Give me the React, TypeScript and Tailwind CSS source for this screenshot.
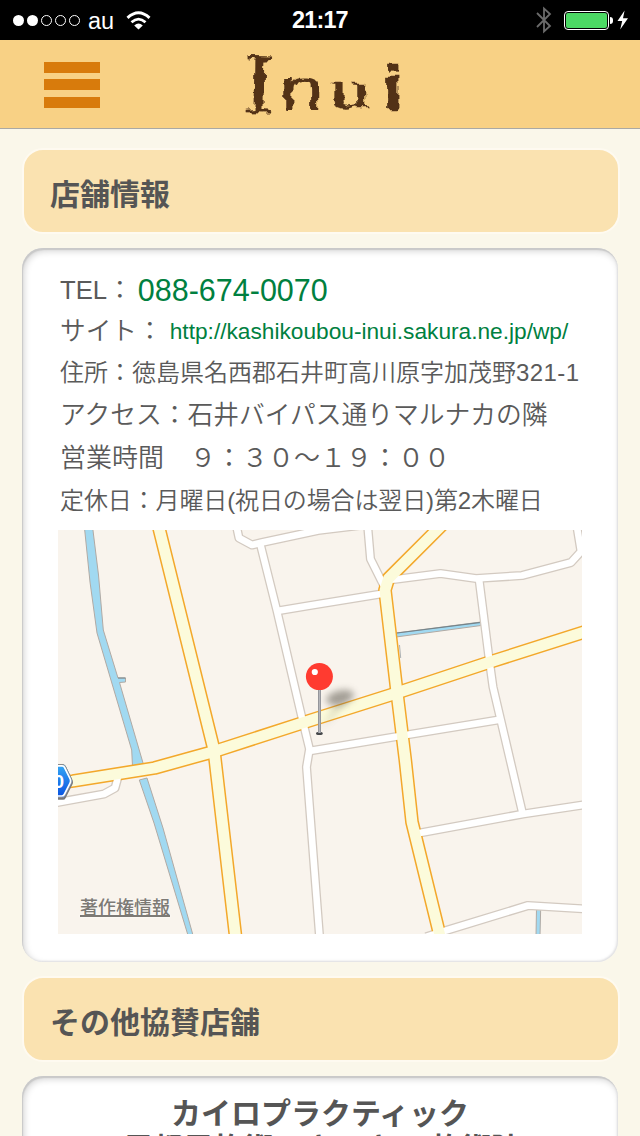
import type { ReactNode } from "react";

const minorRoads = [
  "M236 524 L239 538 L252 545 L262 542.5 L318 530.5 L363 525",
  "M260 543 L277 611 L302 718 L309.5 749 L306.5 767 L319.5 936",
  "M277 611 L310 605.5 L384 593.5",
  "M367.5 524 L370.5 559 L384 586",
  "M390 580 L440.5 573.5 L476 578.5 L522 575.5 L571 562.5 L581 551.5 L576.5 524",
  "M479 579 L489 658 L493 687 L500.5 719 L522.5 813",
  "M309.5 751 L397 736.5 L501 719.5",
  "M417 833.5 L523 814 L586 804.5",
  "M426 937 L443 931.5 L528 905.5 L586 909",
  "M54 803 L104 794 L115 788 L118 777",
];

const mainRoads = [
  "M158 524 L214 750 L236 940",
  "M54 783.5 L73 781 L154.5 768 L214 751.5 L310 720.5 L392 694.5 L490 662 L586 631.5",
  "M442 525 L388.5 578.5 L385 590 L396.7 690 L405.3 760 L412 822 L440 936",
];

function Roads({ paths, className, width }: { paths: string[]; className: string; width: number }) {
  return (
    <g className={className} strokeWidth={width} fill="none" strokeLinejoin="round">
      {paths.map((d) => (
        <path key={d} d={d} />
      ))}
    </g>
  );
}

function ShopMap() {
  return (
    <div className="relative h-[404px] w-[524px] overflow-hidden">
      <svg viewBox="58 530 524 404" className="block h-full w-full" role="img" aria-label="地図">
        <defs>
          <linearGradient id="shield" x1="0" y1="0" x2="0" y2="1">
            <stop offset="0" stopColor="#35a8f5" />
            <stop offset="1" stopColor="#0850e0" />
          </linearGradient>
          <linearGradient id="stick" x1="0" y1="0" x2="1" y2="0">
            <stop offset="0" stopColor="#85868b" />
            <stop offset=".5" stopColor="#b5b6bb" />
            <stop offset="1" stopColor="#85868b" />
          </linearGradient>
          <filter id="soft" x="-50%" y="-50%" width="200%" height="200%">
            <feGaussianBlur stdDeviation="3.8" />
          </filter>
        </defs>
        <rect x="58" y="530" width="524" height="404" fill="#f9f4ed" />
        <g fill="#a1d9f1" stroke="#b1aaa4" strokeWidth="1">
          <path d="M84.5 528 L90 582 L97 633 L131.7 750 L132.7 770 L144.5 768 L119.5 682.5 L125.5 682 L125.5 678 L118 678 L103.3 630 L98.5 575 L92.7 528 Z" />
          <path d="M139.3 780 L147 778 L163 828 L193.5 937 L188.5 937 L154 823 Z" />
          <path d="M396 633 L481 622 L481 625.5 L396 637 Z" />
          <path d="M536.5 908 L540.7 908 L540 936 L536 936 Z" />
        </g>
        <path d="M118 678 H125.5 M397 633 L481 622.3" stroke="#74838a" strokeWidth="1.2" />
        <path d="M399.5 645 L400.7 658" stroke="#aeb2b4" strokeWidth="1" />
        <Roads paths={minorRoads} className="stroke-[#d3cac1]" width={9.2} />
        <Roads paths={mainRoads} className="stroke-[#f3a82b]" width={13.8} />
        <Roads paths={minorRoads} className="stroke-white" width={6.6} />
        <Roads paths={mainRoads} className="stroke-[#fcfbdb]" width={10.8} />
        <path d="M46 764.5 H63.5 Q65 764.5 65.8 766 L72 779 Q73 781 72 783 L65 797 Q64.3 798.5 62.5 798.5 H46 Z" fill="#77777a" transform="translate(.5 1.2)" />
        <path d="M46 764.5 H63 Q64.5 764.5 65.3 766 L71.6 779 Q72.4 781 71.6 783 L65 796 Q64.3 797.5 62.5 797.5 H46 Z" fill="url(#shield)" stroke="#8b8c8e" strokeWidth="1" />
        <path d="M46 765.8 H62.2 Q63.8 765.8 64.5 767.3 L70.2 779 Q71 781 70.2 783 L64.3 794.5 Q63.5 796 62 796 H46" fill="none" stroke="white" strokeWidth="1.7" />
        <text x="53.5" y="787.5" fill="white" fontSize="19" fontWeight="700" fontFamily="Liberation Sans, sans-serif">0</text>
        <ellipse cx="340" cy="697.5" rx="14" ry="7" fill="#5f5a50" opacity=".55" filter="url(#soft)" transform="rotate(-14 340 697.5)" />
        <path d="M321 730 L337 702 L347 702 Z" fill="#6b6554" opacity=".22" filter="url(#soft)" />
        <ellipse cx="319.4" cy="733.4" rx="3.4" ry="1.6" fill="#45474a" />
        <rect x="318" y="688" width="3" height="45" fill="url(#stick)" />
        <circle cx="319.4" cy="676.6" r="13.5" fill="#ff3b30" />
        <circle cx="314.8" cy="672" r="3.1" fill="white" />
      </svg>
      <a className="absolute bottom-[14px] left-[22px] text-[18px] leading-[24px] font-medium text-[#7d7a75] underline decoration-[1.5px] underline-offset-[1px] [text-shadow:0_0_2px_white]">
        著作権情報
      </a>
    </div>
  );
}

function StatusBar() {
  return (
    <div className="flex h-10 items-center bg-black pl-[13px] text-white">
      <div className="flex w-[279px] items-center">
        <div className="flex gap-[3px]">
          {[true, true, false, false, false].map((on, i) => (
            <span
              key={i}
              className={on ? "size-[11px] rounded-full bg-white" : "size-[11px] rounded-full border border-white"}
            />
          ))}
        </div>
        <span className="ml-2 pt-px text-[23.5px] leading-10">au</span>
        <svg viewBox="0 0 25 19" className="ml-[12px] h-[19px] w-[25px]" fill="none" stroke="white">
          <path d="M1.5 6.8 Q12.5 -3.3 23.5 6.8" strokeWidth="3" />
          <path d="M5.5 11.2 Q12.5 5 19.5 11.2" strokeWidth="2.8" />
          <path d="M8.2 14.4 Q12.5 10.5 16.8 14.4 L12.5 18.6 Z" fill="white" stroke="none" />
        </svg>
      </div>
      <span className="w-[242px] pt-px text-[23.4px] font-bold tracking-[-0.8px]">21:17</span>
      <svg viewBox="0 0 18 28" className="h-7 w-[18px]" fill="none" stroke="#6b6b6b" strokeWidth="1.8">
        <path d="M3 7 L16 20 L10 25.5 V2.5 L16 8 L3 21" />
      </svg>
      <div className="ml-[12px] flex h-[19px] w-[45px] rounded-[4px] border-[1.5px] border-white p-px">
        <div className="flex-1 rounded-[2px] bg-[#4cd964]" />
      </div>
      <div className="ml-[1px] h-[7px] w-[3px] rounded-r-full bg-white" />
      <svg viewBox="0 0 12 20" className="ml-[4px] h-5 w-3" fill="white">
        <path d="M7.6 0.5 L0.5 11 H5.2 L3.2 19.5 L11 8.3 H6 Z" />
      </svg>
    </div>
  );
}

function Header() {
  return (
    <header className="flex h-[89px] items-start border-b border-[#aaa9a4] bg-[#f8d185] pl-11">
      <button className="mt-[21.5px] flex w-14 flex-col gap-[6.4px]" aria-label="メニュー">
        <span className="h-[11.2px] w-14 bg-[#d87b0c]" />
        <span className="h-[11.2px] w-14 bg-[#d87b0c]" />
        <span className="h-[11.2px] w-14 bg-[#d87b0c]" />
      </button>
      <svg viewBox="230 40 184 88" className="ml-[130px] h-[88px] w-[184px] overflow-visible">
        <defs>
          <filter id="rough" x="-10%" y="-10%" width="120%" height="120%">
            <feTurbulence type="fractalNoise" baseFrequency=".1" numOctaves="2" seed="4" result="noise" />
            <feDisplacementMap in="SourceGraphic" in2="noise" scale="8" xChannelSelector="R" yChannelSelector="G" />
            <feGaussianBlur stdDeviation=".65" />
          </filter>
        </defs>
        <g filter="url(#rough)" fill="#523218" stroke="#523218" fontFamily="Liberation Serif, serif">
          <text transform="translate(243.5 112) rotate(1) scale(1.1 1)" fontSize="84" strokeWidth=".2">I</text>
          <text transform="translate(280 110) scale(1.25 1)" fontSize="62" strokeWidth=".2" fontFamily="Liberation Sans, sans-serif">n</text>
          <text transform="translate(330 108) scale(1.25 .86)" fontSize="64" strokeWidth=".4">u</text>
          <text transform="translate(382 109) scale(1.25 1)" fontSize="62" fontWeight="700" fontFamily="Liberation Sans, sans-serif" strokeWidth=".5">i</text>
        </g>
      </svg>
    </header>
  );
}

function SectionTitle({ children }: { children: ReactNode }) {
  return (
    <h2 className="mr-5 ml-[22px] flex h-[86px] items-center rounded-[21px] border-2 border-[#fefaf0] bg-[#fae2b0] pt-2 pl-[26px] text-[30px] leading-[40px] font-bold text-[#555]">
      {children}
    </h2>
  );
}

function Card({ className, children }: { className: string; children: ReactNode }) {
  return (
    <section
      className={`mx-[22px] mt-[14px] rounded-[21px] bg-white shadow-[inset_1px_2px_1px_#c9c9c9,inset_2px_3px_7px_#d2d2d2,inset_-1px_-1px_2px_#e2e2e4] ${className}`}
    >
      {children}
    </section>
  );
}

export default function App() {
  return (
    <div className="h-[1136px] w-[640px] overflow-hidden bg-[#faf7ea] font-['Liberation_Sans','Noto_Sans_CJK_JP',sans-serif]">
      <StatusBar />
      <Header />
      <main className="pt-[19px]">
        <SectionTitle>店舗情報</SectionTitle>
        <Card className="h-[714px] px-9 pt-[22px]">
          <div className="flex h-[260px] flex-col pl-[2px] font-[350] whitespace-nowrap text-[#5a5a5a]">
            <p className="flex h-[41px] items-center text-[25.7px]">
              TEL：
              <a className="ml-[5px] text-[30.5px] font-normal text-[#008040]">088-674-0070</a>
            </p>
            <p className="flex h-[41px] items-center text-[25.7px]">
              サイト：
              <a className="ml-[7px] text-[22.7px] font-normal text-[#008040]">http://kashikoubou-inui.sakura.ne.jp/wp/</a>
            </p>
            <p className="h-[42px] text-[24px] leading-[42px]">
              住所：徳島県名西郡石井町高川原字加茂野<span className="tracking-[0.4px]">321-1</span>
            </p>
            <p className="h-[43px] text-[25.75px] leading-[43px]">アクセス：石井バイパス通りマルナカの隣</p>
            <p className="h-[42px] text-[26px] leading-[42px]">営業時間　９：３０〜１９：００</p>
            <p className="h-[43px] text-[24px] leading-[43px] tracking-[-0.12px]">定休日：月曜日(祝日の場合は翌日)第2木曜日</p>
          </div>
          <ShopMap />
        </Card>
        <div className="mt-[14px]">
          <SectionTitle>その他協賛店舗</SectionTitle>
        </div>
        <Card className="h-[200px] pt-[20px] text-center text-[30px] leading-[35px] font-bold text-[#555]">
          <p>カイロプラクティック</p>
          <p className="pl-1">
            民都民施術いきいき<span className="ml-2">の施術院</span>
          </p>
        </Card>
      </main>
    </div>
  );
}
